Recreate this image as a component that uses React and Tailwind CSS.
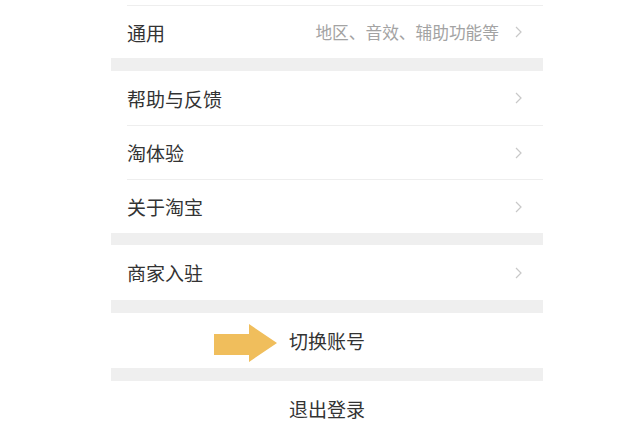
import React from "react";

const font = { fontFamily: '"Noto Sans CJK SC", "Noto Sans", sans-serif' };

function Chevron() {
  return (
    <svg width="7" height="12" viewBox="0 0 7 12" className="shrink-0">
      <path d="M1 1 L6 6 L1 11" fill="none" stroke="#c8c8c8" strokeWidth="1.2" />
    </svg>
  );
}

function Row({ label, hint, h }) {
  return (
    <div className={`flex items-center pl-[16px] pr-[21px] ${h}`}>
      <span className="text-[19px] text-[#333333] leading-none">{label}</span>
      <div className="flex-1" />
      {hint && <span className="text-[16.7px] text-[#a3a3a3] leading-none mr-[16px]">{hint}</span>}
      <Chevron />
    </div>
  );
}

function Divider() {
  return <div className="h-px ml-[16px] bg-[#eeeeee]" />;
}

function Gap({ h }) {
  return <div className={`bg-[#efefef] ${h}`} />;
}

export default function App() {
  return (
    <div className="w-[640px] h-[426px] bg-white overflow-hidden" style={font}>
      <div className="ml-[111px] w-[432px] bg-white">
        <div className="h-[5px]" />
        <Divider />
        <Row label="通用" hint="地区、音效、辅助功能等" h="h-[52px]" />
        <Gap h="h-[13px]" />
        <Row label="帮助与反馈" h="h-[54px]" />
        <Divider />
        <Row label="淘体验" h="h-[53px]" />
        <Divider />
        <Row label="关于淘宝" h="h-[53px]" />
        <Gap h="h-[12px]" />
        <Row label="商家入驻" h="h-[55px]" />
        <Gap h="h-[13px]" />
        <div className="relative h-[55px] flex items-center justify-center">
          <svg
            className="absolute left-[103px] top-[11px]"
            width="63"
            height="38"
            viewBox="0 0 63 38"
          >
            <polygon points="0,10 35,10 35,0 63,19 35,38 35,31 0,31" fill="#f0be5c" />
          </svg>
          <span className="text-[19px] text-[#333333] leading-none">切换账号</span>
        </div>
        <Gap h="h-[13px]" />
        <div className="h-[55px] flex items-center justify-center">
          <span className="text-[19px] text-[#333333] leading-none">退出登录</span>
        </div>
      </div>
    </div>
  );
}
